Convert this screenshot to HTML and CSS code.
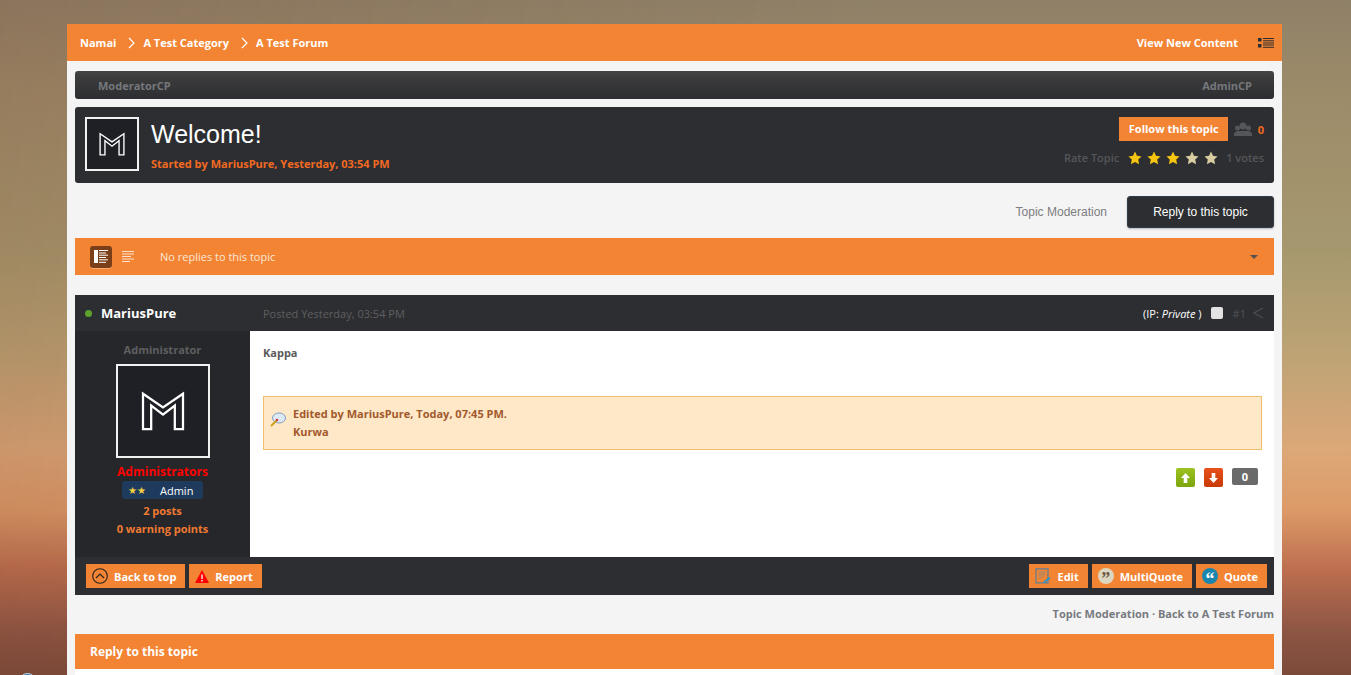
FILE: index.html
```html
<!DOCTYPE html>
<html lang="en">
<head>
    <meta charset="UTF-8">
    <title>Welcome! - A Test Forum</title>
    <link rel="stylesheet" href="styles.css">
</head>
<body>
    <div class="wrapper">
        <div class="top-bar">
            <div class="crumbs">
                <a>Namai</a>
                <svg class="crumb-sep" width="8" height="12" viewBox="0 0 8 12"><path d="M1 1l5 5-5 5" fill="none" stroke="#fff" stroke-width="1.2"/></svg>
                <a>A Test Category</a>
                <svg class="crumb-sep" width="8" height="12" viewBox="0 0 8 12"><path d="M1 1l5 5-5 5" fill="none" stroke="#fff" stroke-width="1.2"/></svg>
                <a>A Test Forum</a>
            </div>
            <div class="top-right">
                <a>View New Content</a>
                <svg width="16" height="10" viewBox="0 0 16 10"><path d="M0 0h3.500v3.500H0zM0 6h3.500v3.500H0z" fill="#2d2e31"/><path d="M5 .5h11M5 2.800h11M5 5h11M5 7h11M5 9.300h11" stroke="#2d2e31" stroke-width="1"/></svg>
            </div>
        </div>

        <div class="content">
            <div class="admin-bar">
                <a>ModeratorCP</a>
                <a>AdminCP</a>
            </div>

            <div class="topic-head">
                <div class="avatar avatar-small">
                    <svg width="26" height="24" viewBox="0 0 48 44"><path d="M2 42V3l22 15L46 3v39h-9V16L24 26 11 16v26z" fill="none" stroke="#fff" stroke-width="2.500"/></svg>
                </div>
                <div class="topic-title">
                    <h1>Welcome!</h1>
                    <div class="started">Started by MariusPure, Yesterday, 03:54 PM</div>
                </div>
                <div class="topic-side">
                    <div class="follow-row">
                        <a class="follow-btn">Follow this topic</a>
                        <svg width="18" height="14" viewBox="0 0 18 14"><g fill="#55565a"><circle cx="9" cy="4" r="3.500"/><circle cx="3.500" cy="6" r="2.500"/><circle cx="14.500" cy="6" r="2.500"/><path d="M0 14v-3l3-2h12l3 2v3z"/></g></svg>
                        <span class="follow-count">0</span>
                    </div>
                    <div class="rate-row">
                        <span class="rate-label">Rate Topic</span>
                        <span class="stars">
                            <svg class="star on" viewBox="0 0 24 24"><path d="M12 1l3.400 7.300 7.800 1-5.700 5.400 1.500 7.900L12 18.700l-7 3.900 1.500-7.900L.8 9.300l7.800-1z"/></svg>
                            <svg class="star on" viewBox="0 0 24 24"><path d="M12 1l3.400 7.300 7.800 1-5.700 5.400 1.500 7.900L12 18.700l-7 3.900 1.500-7.900L.8 9.300l7.800-1z"/></svg>
                            <svg class="star on" viewBox="0 0 24 24"><path d="M12 1l3.400 7.300 7.800 1-5.700 5.400 1.500 7.900L12 18.700l-7 3.900 1.500-7.900L.8 9.300l7.800-1z"/></svg>
                            <svg class="star" viewBox="0 0 24 24"><path d="M12 1l3.400 7.300 7.800 1-5.700 5.400 1.500 7.900L12 18.700l-7 3.900 1.500-7.900L.8 9.300l7.800-1z"/></svg>
                            <svg class="star" viewBox="0 0 24 24"><path d="M12 1l3.400 7.300 7.800 1-5.700 5.400 1.500 7.900L12 18.700l-7 3.900 1.500-7.900L.8 9.300l7.800-1z"/></svg>
                        </span>
                        <span class="rate-votes">1 votes</span>
                    </div>
                </div>
            </div>

            <div class="topic-actions">
                <a class="mod-link">Topic Moderation</a>
                <a class="reply-btn">Reply to this topic</a>
            </div>

            <div class="replies-bar">
                <span class="view-btn active">
                    <svg width="14" height="13" viewBox="0 0 14 13"><path d="M0 0h4v13H0z" fill="#fff"/><path d="M5 .5h9M5 3h7M5 5.200h9M5 7.500h7M5 9.800h9M5 12.300h7" stroke="#fff" stroke-width="1"/></svg>
                </span>
                <span class="view-btn">
                    <svg width="13" height="12" viewBox="0 0 13 12"><path d="M0 .5h12M0 3h12M0 5.500h9M0 8h12M0 10.500h8" stroke="#fff" stroke-opacity=".75" stroke-width="1"/></svg>
                </span>
                <span class="replies-text">No replies to this topic</span>
                <span class="replies-caret"></span>
            </div>

            <div class="post">
                <div class="post-head">
                    <div class="post-author"><span class="online-dot"></span>MariusPure</div>
                    <div class="post-date">Posted Yesterday, 03:54 PM</div>
                    <div class="post-meta">
                        <span class="post-ip">(IP: <em>Private</em> )</span>
                        <span class="post-check"></span>
                        <span class="post-num">#1</span>
                        <svg width="11" height="12" viewBox="0 0 11 12"><path d="M10 1L1 6l9 5" fill="none" stroke="#4c4d50" stroke-width="1.200"/></svg>
                    </div>
                </div>
                <div class="post-main">
                    <div class="author-col">
                        <div class="author-title">Administrator</div>
                        <div class="avatar avatar-big">
                            <svg width="46" height="40" viewBox="0 0 48 44"><path d="M2 42V3l22 15L46 3v39h-9V16L24 26 11 16v26z" fill="none" stroke="#fff" stroke-width="2.500"/></svg>
                        </div>
                        <div class="author-group">Administrators</div>
                        <div class="author-rank"><span class="rank-stars">★★</span>Admin</div>
                        <div class="author-stat">2 posts</div>
                        <div class="author-stat">0 warning points</div>
                    </div>
                    <div class="post-body">
                        <p class="post-text">Kappa</p>
                        <div class="edit-note">
                            <svg class="edit-icon" width="16" height="15" viewBox="0 0 16 15"><ellipse cx="9" cy="6" rx="6.500" ry="5" fill="#dfe9f5" stroke="#7f9fc0"/><path d="M1 14l6-6" stroke="#c9a020" stroke-width="2"/><circle cx="7" cy="8" r="1.300" fill="#d04040"/></svg>
                            <div>
                                <div>Edited by MariusPure, Today, 07:45 PM.</div>
                                <div>Kurwa</div>
                            </div>
                        </div>
                        <div class="votes">
                            <span class="vote vote-up"><svg width="9" height="10" viewBox="0 0 9 10"><path d="M4.500 0L9 5H6.300v5H2.700V5H0z" fill="#fff"/></svg></span>
                            <span class="vote vote-down"><svg width="9" height="10" viewBox="0 0 9 10"><path d="M4.500 10L9 5H6.300V0H2.700v5H0z" fill="#fff"/></svg></span>
                            <span class="vote-count">0</span>
                        </div>
                    </div>
                </div>
                <div class="post-foot">
                    <div class="foot-group">
                        <a class="foot-btn">
                            <svg width="16" height="16" viewBox="0 0 16 16"><circle cx="8" cy="8" r="7.300" fill="none" stroke="#222" stroke-width="1.100"/><path d="M4 10l4-4 4 4" fill="none" stroke="#222" stroke-width="1.100"/></svg>
                            Back to top
                        </a>
                        <a class="foot-btn">
                            <svg width="14" height="13" viewBox="0 0 14 13"><path d="M7 0l7 13H0z" fill="#f00"/><path d="M6.300 4.500h1.400v4.500H6.300zM6.300 10h1.400v1.500H6.300z" fill="#f3f3f3"/></svg>
                            Report
                        </a>
                    </div>
                    <div class="foot-group">
                        <a class="foot-btn">
                            <svg width="16" height="16" viewBox="0 0 16 16"><path d="M1 .8h12v14H1z" fill="none" stroke="#5c7f96" stroke-width="1.200"/><path d="M3.500 4h7M3.500 6h7M3.500 8h6M3.500 10h3" stroke="#9a8a70" stroke-width="1"/><path d="M8 14l6-5 1.500 1.500-6 4.500z" fill="#2a93c9"/></svg>
                            Edit
                        </a>
                        <a class="foot-btn">
                            <span class="quote-icon quote-grey">”</span>
                            MultiQuote
                        </a>
                        <a class="foot-btn">
                            <span class="quote-icon quote-blue">“</span>
                            Quote
                        </a>
                    </div>
                </div>
            </div>

            <div class="bottom-links">Topic Moderation · Back to A Test Forum</div>

            <div class="reply-box">
                <h3>Reply to this topic</h3>
            </div>
        </div>
    </div>
    <span class="corner-badge"></span>
</body>
</html>
```

FILE: styles.css
```css
html, body {
    height: 675px;
    overflow: hidden;
}

body {
    margin: 0;
    padding: 24px 0 0;
    box-sizing: border-box;
    font-family: "Open Sans", "Noto Sans", sans-serif;
    font-size: 11px;
    background:
        linear-gradient(100deg, rgba(120, 60, 40, .18) 0%, rgba(120, 60, 40, 0) 60%),
        linear-gradient(180deg, #8f8068 0, #9c8b69 90px, #a6986e 250px, #b9a274 340px, #dca878 450px, #dd9a68 510px, #bc6e4e 570px, #8e5644 630px, #7c4a3a 675px);
}

a {
    cursor: pointer;
}

.wrapper {
    width: 1215px;
    margin-left: 67px;
    background-color: #f4f4f4;
    height: 651px;
    overflow: hidden;
}

.top-bar {
    height: 37px;
    display: flex;
    align-items: center;
    justify-content: space-between;
    padding: 0 8px 0 13px;
    background-color: #f38434;
    color: #fff;
    font-weight: 700;
}

.crumbs {
    display: flex;
    align-items: center;
}

.crumb-sep {
    margin: 0 7px 0 12px;
}

.top-right {
    display: flex;
    align-items: center;
    gap: 20px;
}

.content {
    padding: 10px 8px 0;
}

.admin-bar {
    height: 28px;
    display: flex;
    align-items: center;
    justify-content: space-between;
    padding: 0 22px 0 23px;
    background: linear-gradient(180deg, #444 0, #3a3a3b 30%, #2d2e31 100%);
    border-radius: 3px;
    color: #75787c;
    font-weight: 700;
}

.topic-head {
    height: 76px;
    margin-top: 8px;
    display: flex;
    padding: 10px;
    box-sizing: border-box;
    background-color: #2d2e31;
    border-radius: 3px;
}

.avatar {
    display: flex;
    align-items: center;
    justify-content: center;
    background-color: #1f2026;
    border: 2px solid #f1f1f1;
    box-sizing: border-box;
    flex-shrink: 0;
}

.avatar-small {
    width: 54px;
    height: 54px;
}

.avatar-big {
    width: 94px;
    height: 94px;
}

.topic-title {
    margin-left: 12px;
    flex: 1;
}

.topic-title h1 {
    margin: 3px 0 0;
    font-family: "Liberation Sans", Arial, sans-serif;
    font-size: 25px;
    line-height: 29px;
    font-weight: 400;
    color: #fff;
}

.started {
    margin-top: 7px;
    color: #f26a22;
    font-weight: 700;
}

.topic-side {
    display: flex;
    flex-direction: column;
    align-items: flex-end;
}

.follow-row {
    display: flex;
    align-items: center;
    gap: 6px;
    margin-right: 0;
}

.follow-btn {
    height: 24px;
    line-height: 24px;
    padding: 0 9px 0 10px;
    margin-right: 0;
    background-color: #f38434;
    color: #fff;
    font-weight: 700;
}

.follow-count {
    color: #f26a22;
    font-weight: 700;
}

.rate-row {
    display: flex;
    align-items: center;
    margin-top: 9px;
    color: #55565a;
    font-weight: 600;
}

.stars {
    display: flex;
    gap: 5px;
    margin: 0 8px 0 9px;
}

.star {
    width: 14px;
    height: 14px;
    fill: #d8cda0;
}

.star.on {
    fill: #f6c50f;
}

.topic-actions {
    height: 32px;
    margin-top: 13px;
    display: flex;
    justify-content: flex-end;
    align-items: center;
    font-family: "Liberation Sans", Arial, sans-serif;
    font-size: 12px;
}

.mod-link {
    color: #7d7d80;
    margin-right: 20px;
}

.reply-btn {
    width: 147px;
    height: 32px;
    line-height: 31px;
    text-align: center;
    background-color: #2d2e31;
    border: 1px solid #2f3b47;
    box-sizing: border-box;
    border-radius: 3px;
    box-shadow: 0 1px 2px rgba(0, 0, 0, .25);
    color: #fff;
}

.replies-bar {
    height: 37px;
    margin-top: 10px;
    display: flex;
    align-items: center;
    padding: 0 16px 0 15px;
    background-color: #f38434;
    color: #fff;
}

.view-btn {
    width: 22px;
    height: 22px;
    display: flex;
    align-items: center;
    justify-content: center;
    border-radius: 3px;
    margin-right: 5px;
}

.view-btn.active {
    background-color: #7a3f18;
    box-shadow: 0 1px 0 rgba(255, 255, 255, .3);
}

.replies-text {
    margin-left: 16px;
    flex: 1;
    color: #fbe8d8;
}

.replies-caret {
    width: 0;
    height: 0;
    border-left: 4px solid transparent;
    border-right: 4px solid transparent;
    border-top: 4px solid #54514e;
}

.post {
    margin-top: 20px;
}

.post-head {
    height: 36px;
    display: flex;
    align-items: center;
    background-color: #2d2e31;
    color: #fff;
}

.post-author {
    width: 188px;
    display: flex;
    align-items: center;
    padding-left: 10px;
    box-sizing: border-box;
    font-size: 13px;
    font-weight: 700;
}

.online-dot {
    width: 7px;
    height: 7px;
    margin-right: 9px;
    border-radius: 50%;
    background-color: #5ca22c;
}

.post-date {
    flex: 1;
    color: #5f5f60;
}

.post-meta {
    display: flex;
    align-items: center;
    padding-right: 10px;
}

.post-ip {
    margin-right: 9px;
}

.post-check {
    width: 12px;
    height: 12px;
    background-color: #e2e2e2;
    border-radius: 2px;
    margin-right: 10px;
}

.post-num {
    color: #4c5258;
    margin-right: 7px;
}

.post-main {
    display: flex;
    height: 226px;
}

.author-col {
    width: 175px;
    flex-shrink: 0;
    display: flex;
    flex-direction: column;
    align-items: center;
    background-color: #26272a;
    color: #f07a32;
    font-weight: 700;
}

.author-title {
    margin-top: 11px;
    line-height: 16px;
    color: #5e5f60;
}

.avatar-big {
    margin-top: 6px;
}

.author-group {
    margin-top: 5px;
    line-height: 18px;
    font-size: 12px;
    color: #f00;
}

.author-rank {
    width: 81px;
    height: 18px;
    margin-bottom: 3px;
    display: flex;
    align-items: center;
    padding-left: 6px;
    box-sizing: border-box;
    border-radius: 3px;
    background-color: #1e3a5c;
    color: #fff;
    font-weight: 400;
}

.rank-stars {
    width: 32px;
    color: #f5d142;
    font-size: 10px;
    font-family: "DejaVu Sans", sans-serif;
}

.author-stat {
    line-height: 18px;
}

.post-body {
    flex: 1;
    padding: 14px 12px 0 13px;
    background-color: #fff;
    color: #5a5a5a;
    font-weight: 700;
}

.post-text {
    margin: 0;
    line-height: 15px;
}

.edit-note {
    height: 54px;
    margin-top: 36px;
    display: flex;
    padding: 8px 0 0 6px;
    box-sizing: border-box;
    border: 1px solid #efbd6c;
    background-color: #fee8c8;
    color: #a2592c;
    line-height: 18px;
}

.edit-icon {
    margin: 7px 7px 0 0;
}

.votes {
    display: flex;
    justify-content: flex-end;
    align-items: flex-start;
    gap: 9px;
    margin-top: 18px;
    padding-right: 4px;
}

.vote {
    width: 19px;
    height: 19px;
    display: flex;
    align-items: center;
    justify-content: center;
    border-radius: 2px;
}

.vote-up {
    background: linear-gradient(180deg, #9cc220, #7ca60c);
}

.vote-down {
    background: linear-gradient(180deg, #e8501c, #c83a06);
}

.vote-count {
    width: 26px;
    height: 17px;
    line-height: 17px;
    text-align: center;
    border-radius: 2px;
    background-color: #6a6a6a;
    color: #fff;
    font-weight: 700;
}

.post-foot {
    height: 38px;
    display: flex;
    align-items: center;
    justify-content: space-between;
    padding: 0 7px 0 11px;
    background-color: #2d2e31;
}

.foot-group {
    display: flex;
    gap: 4px;
}

.foot-btn {
    height: 24px;
    display: flex;
    align-items: center;
    gap: 6px;
    padding: 0 9px 0 6px;
    background-color: #f38434;
    color: #fff;
    font-weight: 700;
}

.quote-icon {
    width: 16px;
    height: 16px;
    border-radius: 50%;
    font-family: "Liberation Serif", serif;
    font-size: 18px;
    line-height: 22px;
    text-align: center;
}

.quote-grey {
    background-color: #ddd6c0;
    color: #6b5a44;
}

.quote-blue {
    background-color: #1b85ad;
    color: #fff;
}

.bottom-links {
    margin-top: 11px;
    line-height: 15px;
    text-align: right;
    color: #777a80;
    font-weight: 700;
}

.reply-box {
    margin-top: 13px;
    background-color: #fff;
    height: 60px;
}

.reply-box h3 {
    margin: 0;
    height: 35px;
    line-height: 35px;
    padding-left: 15px;
    background-color: #f38434;
    color: #fff;
    font-size: 12px;
    font-weight: 700;
}

.corner-badge {
    position: absolute;
    left: 19px;
    top: 673px;
    width: 17px;
    height: 17px;
    border-radius: 50%;
    background-color: #2a6fa8;
    border: 1px solid #cfe0ee;
    box-sizing: border-box;
}
```
